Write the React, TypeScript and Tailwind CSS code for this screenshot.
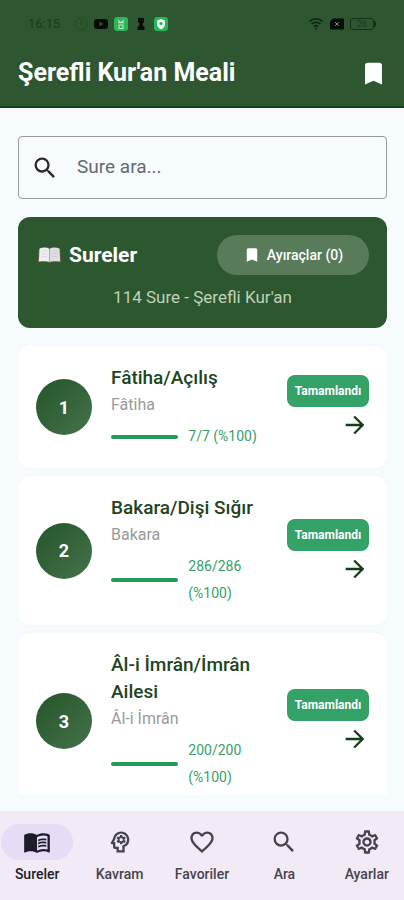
import type { ComponentType } from "react";
import {
  MdArrowForward,
  MdBookmark,
  MdFavoriteBorder,
  MdMenuBook,
  MdOutlinePsychology,
  MdOutlineSettings,
  MdSearch,
} from "react-icons/md";

type Sure = { no: number; title: string; name: string; read: number; total: number };

const sureler: Sure[] = [
  { no: 1, title: "Fâtiha/Açılış", name: "Fâtiha", read: 7, total: 7 },
  { no: 2, title: "Bakara/Dişi Sığır", name: "Bakara", read: 286, total: 286 },
  { no: 3, title: "Âl-i İmrân/İmrân Ailesi", name: "Âl-i İmrân", read: 200, total: 200 },
];

type NavItem = { label: string; Icon: ComponentType<{ className?: string }> };

const navItems: NavItem[] = [
  { label: "Sureler", Icon: MdMenuBook },
  { label: "Kavram", Icon: MdOutlinePsychology },
  { label: "Favoriler", Icon: MdFavoriteBorder },
  { label: "Ara", Icon: MdSearch },
  { label: "Ayarlar", Icon: MdOutlineSettings },
];

function StatusBar() {
  return (
    <div className="flex h-12 items-center justify-between pr-7 pl-7 text-[#173a1a]">
      <div className="flex items-center gap-1.5">
        <span className="mr-1 text-[13px] leading-5">16:15</span>
        <svg viewBox="0 0 14 14" className="ml-1 size-3.5" fill="none" stroke="#1d4a21" aria-hidden="true">
          <circle cx="7" cy="7" r="6" strokeDasharray="3 1" />
          <path d="M7 3v5" />
        </svg>
        <svg viewBox="0 0 14 14" className="size-3.5" aria-hidden="true">
          <rect y="2" width="14" height="10" rx="3" fill="#050d06" />
          <path d="M5.500 4.800v4.400L9.300 7z" fill="#2e5631" />
        </svg>
        <svg viewBox="0 0 14 14" className="size-3.5" aria-hidden="true">
          <rect width="14" height="14" rx="3" fill="#2fb457" />
          <path d="M4 3l2 2.200h2L10 3M4 5.800h6M5 8h4v3.500H5z" stroke="#b5efc4" strokeWidth="1.100" fill="none" />
        </svg>
        <svg viewBox="0 0 14 14" className="size-3.5" aria-hidden="true">
          <path d="M4 1h6v4L8.500 6.500 9 9l1.500 1v3h-7v-3L5 9l.5-2.500L4 5z" fill="#050d06" />
        </svg>
        <svg viewBox="0 0 14 14" className="size-3.5" aria-hidden="true">
          <rect width="14" height="14" rx="3" fill="#26b45a" />
          <path d="M7 2l4 1.500v4c0 2.200-1.500 3.800-4 4.800-2.500-1-4-2.600-4-4.800v-4z" fill="#e9fbef" />
          <circle cx="7" cy="6.500" r="1.600" fill="#26b45a" />
        </svg>
      </div>
      <div className="flex items-center gap-1.5">
        <svg viewBox="0 0 16 14" className="h-3.5 w-4" fill="none" stroke="#0d2410" strokeWidth="1.500" aria-hidden="true">
          <path d="M1.500 4.500c4-3.300 9-3.300 13 0M3.500 7c2.800-2.300 6.200-2.300 9 0M5.800 9.500c1.400-1.100 3-1.100 4.400 0" />
          <path d="M8 10.500v2" />
        </svg>
        <svg viewBox="0 0 14 14" className="size-3.5" aria-hidden="true">
          <path d="M3 1.500h10a1 1 0 0 1 1 1v9a1 1 0 0 1-1 1H1a1 1 0 0 1-1-1V4.500z" fill="#050d06" />
          <path d="M5 5l4 4M9 5L5 9" stroke="#6d8a6f" />
        </svg>
        <div className="flex items-center">
          <span className="flex h-3 w-6 items-center justify-center rounded-[3px] border border-[#14321a] text-[9px] leading-none">
            26
          </span>
          <span className="h-1.5 w-0.5 rounded-r-sm bg-[#14321a]" />
        </div>
      </div>
    </div>
  );
}

function BookIcon() {
  return (
    <svg viewBox="0 0 24 18" className="h-[17px] w-[23px]" aria-hidden="true">
      <path d="M.8 2.500h22.400l.6 13.500H13.500l-1.500 1-1.500-1H.2z" fill="#b9605a" />
      <path d="M1.500 1.500C5 .3 9.500.3 12 2v14c-3-1.300-7.500-1.300-11.200-.6z" fill="#eeeef0" />
      <path d="M22.500 1.500C19 .3 14.500.3 12 2v14c3-1.300 7.500-1.300 11.200-.6z" fill="#dedfe3" />
      <path d="M12 2v14" stroke="#a4a8b1" />
      <path
        d="M3.500 4.500c2-.6 4-.6 6 0M3.300 7.500c2-.6 4.200-.6 6.200 0M3 10.500c2-.6 4.500-.6 6.500 0M14.500 4.500c2-.6 4-.6 6 0M14.500 7.500c2-.6 4.200-.6 6.200 0M14.500 10.500c2-.6 4.500-.6 6.500 0"
        stroke="#cbcdd4"
        strokeWidth=".7"
        fill="none"
      />
    </svg>
  );
}

function SureCard({ sure }: { sure: Sure }) {
  const percent = Math.round((sure.read / sure.total) * 100);
  return (
    <li className="flex shrink-0 items-center rounded-xl bg-white p-[18px] shadow-[0_0_4px_rgba(30,60,90,0.03)]">
      <span className="flex size-14 shrink-0 items-center justify-center rounded-full bg-linear-to-br from-[#24552a] to-[#45724a] text-[18px] font-bold text-white">
        {sure.no}
      </span>
      <div className="mr-[18px] ml-[19px] min-w-0 flex-1">
        <h3 className="text-[19px] leading-[27px] font-medium text-[#1d4522]">{sure.title}</h3>
        <p className="text-[16px] leading-[27px] text-[#999a9b]">{sure.name}</p>
        <div className="mt-[5px] grid grid-cols-[5fr_6fr] items-center gap-2.5">
          <div
            role="progressbar"
            aria-label={sure.title}
            aria-valuenow={percent}
            className="h-1 overflow-hidden rounded-full bg-[#dcefe5]"
          >
            <div className="h-full bg-[#239a5e]" style={{ width: `${percent}%` }} />
          </div>
          <span className="text-[14px] leading-[27px] text-[#35a06c]">
            {sure.read}/{sure.total} (%{percent})
          </span>
        </div>
      </div>
      <div className="flex shrink-0 flex-col items-end gap-1">
        <span className="flex h-8 w-[82px] items-center justify-center rounded-lg bg-[#34a167] text-[12px] font-bold text-white">
          Tamamlandı
        </span>
        <button type="button" aria-label={`${sure.title} aç`} className="text-[#163d1b]">
          <MdArrowForward className="size-7" />
        </button>
      </div>
    </li>
  );
}

export default function App() {
  return (
    <div className="flex h-dvh flex-col bg-[#f6fbfe] font-['Roboto',sans-serif]">
      <header className="shrink-0 border-b-2 border-[#12431a] bg-[#2e5631]">
        <StatusBar />
        <div className="flex items-center justify-between pr-4 pb-2 pl-[18px]">
          <h1 className="text-[25px] leading-[50px] font-bold text-white">Şerefli Kur'an Meali</h1>
          <button type="button" aria-label="Ayıraçlar" className="text-white">
            <MdBookmark className="size-[29px]" />
          </button>
        </div>
      </header>

      <main className="flex min-h-0 flex-1 flex-col pt-7 pr-[17px] pb-[17px] pl-[18px]">
        <label className="flex h-[63px] shrink-0 items-center rounded-[4px] border border-[#96989b] pr-3 pl-3">
          <MdSearch className="size-7 shrink-0 text-[#26292b]" />
          <input
            type="text"
            aria-label="Sure ara"
            placeholder="Sure ara..."
            className="ml-[18px] min-w-0 flex-1 bg-transparent text-[19px] outline-none placeholder:text-[#66696c]"
          />
        </label>

        <section className="mt-[18px] shrink-0 rounded-xl bg-[#2c572f] px-[18px] pt-[18px] pb-[17px]">
          <div className="flex items-center justify-between">
            <h2 className="flex items-center gap-2 pl-0.5 text-[21px] leading-10 font-bold text-white">
              <BookIcon />
              Sureler
            </h2>
            <button
              type="button"
              className="flex h-10 w-[152px] items-center justify-center gap-1.5 rounded-full bg-[#587c5a] text-[14px] font-medium text-white"
            >
              <MdBookmark className="size-[18px]" />
              Ayıraçlar (0)
            </button>
          </div>
          <p className="mt-2 text-center text-[17px] leading-7 text-[#bfd2bd]">114 Sure - Şerefli Kur'an</p>
        </section>

        <ul className="mt-[18px] flex min-h-0 flex-1 flex-col gap-2 overflow-y-auto [scrollbar-width:none]">
          {sureler.map((sure) => (
            <SureCard key={sure.no} sure={sure} />
          ))}
        </ul>
      </main>

      <nav className="grid shrink-0 grid-cols-5 gap-2 bg-[#f2ebf6] pt-[13px] pb-4">
        {navItems.map(({ label, Icon }, index) => (
          <a
            key={label}
            href={`#${label.toLowerCase()}`}
            aria-current={index === 0 ? "page" : undefined}
            className={`flex flex-col items-center gap-1 ${index === 0 ? "text-[#201b2b]" : "text-[#47434d]"}`}
          >
            <span
              className={`flex h-9 w-full max-w-18 items-center justify-center rounded-full ${index === 0 ? "bg-[#e6dcf6]" : ""}`}
            >
              <Icon className="size-7" />
            </span>
            <span className="text-[14px] leading-5 font-medium">{label}</span>
          </a>
        ))}
      </nav>
    </div>
  );
}
